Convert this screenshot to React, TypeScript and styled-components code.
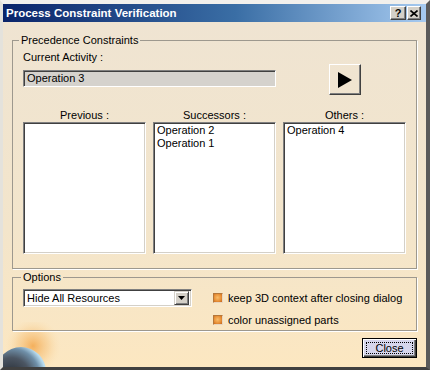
import React from 'react';
import styled, { createGlobalStyle } from 'styled-components';

const GlobalStyle = createGlobalStyle`
    body {
        margin: 0;
        background: #ffffff;
        font-family: "Liberation Sans", Arial, sans-serif;
        font-size: 11px;
        color: #000;
    }
`;

const columns = [
    { title: 'Previous :', items: [] as string[] },
    { title: 'Successors :', items: ['Operation 2', 'Operation 1'] },
    { title: 'Others :', items: ['Operation 4'] },
];

const options = ['keep 3D context after closing dialog', 'color unassigned parts'];

const App = () => {
    return (
        <>
            <GlobalStyle />
            <Window>
                <TitleBar>
                    <Title>Process Constraint Verification</Title>
                    <CaptionButtons>
                        <CaptionButton $w={16}>?</CaptionButton>
                        <CaptionButton $w={14}>
                            <svg width='8' height='7' viewBox='0 0 8 7'>
                                <path d='M0.5 0.5 L7.5 6.5 M7.5 0.5 L0.5 6.5' stroke='#000' strokeWidth='1.6' />
                            </svg>
                        </CaptionButton>
                    </CaptionButtons>
                </TitleBar>
                <Body>
                    <Globe width='60' height='45' viewBox='0 0 60 45'>
                        <defs>
                            <radialGradient id='glow' cx='0.5' cy='0.5' r='0.5'>
                                <stop offset='0' stopColor='#f3a64a' stopOpacity='0.85' />
                                <stop offset='0.55' stopColor='#f6c27a' stopOpacity='0.45' />
                                <stop offset='1' stopColor='#fbe0b0' stopOpacity='0' />
                            </radialGradient>
                            <radialGradient id='earth' cx='0.3' cy='0.6' r='0.7'>
                                <stop offset='0' stopColor='#23282f' />
                                <stop offset='0.55' stopColor='#4b5562' />
                                <stop offset='0.82' stopColor='#6f8fa8' />
                                <stop offset='1' stopColor='#b8dcf0' />
                            </radialGradient>
                        </defs>
                        <circle cx='30' cy='24' r='28' fill='url(#glow)' />
                        <circle cx='18' cy='50' r='25' fill='url(#earth)' />
                    </Globe>
                    <Group>
                        <Legend $shift={-4}>Precedence Constraints</Legend>
                        <FieldLabel>Current Activity :</FieldLabel>
                        <ActivityRow>
                            <ReadOnlyField>Operation 3</ReadOnlyField>
                            <PlayButton>
                                <svg width='14' height='16' viewBox='0 0 14 16'>
                                    <path d='M0 0 L14 8 L0 16 Z' fill='#000' />
                                </svg>
                            </PlayButton>
                        </ActivityRow>
                        <Columns>
                            {columns.map((col) => (
                                <Column key={col.title}>
                                    <ColumnTitle>{col.title}</ColumnTitle>
                                    <ListBox>
                                        {col.items.map((item) => (
                                            <ListItem key={item}>{item}</ListItem>
                                        ))}
                                    </ListBox>
                                </Column>
                            ))}
                        </Columns>
                    </Group>
                    <Group $bottom={2} $gap={2}>
                        <Legend $shift={-2}>Options</Legend>
                        <OptionsRow>
                            <Select>
                                <SelectText>Hide All Resources</SelectText>
                                <DropButton>
                                    <svg width='7' height='4' viewBox='0 0 7 4'>
                                        <path d='M0 0 L7 0 L3.5 4 Z' fill='#000' />
                                    </svg>
                                </DropButton>
                            </Select>
                            <Checks>
                                {options.map((label) => (
                                    <CheckRow key={label}>
                                        <CheckBox />
                                        {label}
                                    </CheckRow>
                                ))}
                            </Checks>
                        </OptionsRow>
                    </Group>
                    <Footer>
                        <CloseButton>
                            <FocusRing>Close</FocusRing>
                        </CloseButton>
                    </Footer>
                </Body>
            </Window>
        </>
    );
};

const Window = styled.div`
    position: relative;
    width: 430px;
    height: 370px;
    box-sizing: border-box;
    display: flex;
    flex-direction: column;
    border-style: solid;
    border-width: 4px 4px 3px 3px;
    border-color: #f2f0ec #5a5a5a #404040 #e4e2dc;
    overflow: hidden;
`;

const TitleBar = styled.div`
    height: 18px;
    display: flex;
    align-items: center;
    justify-content: space-between;
    padding: 0 5px 0 3px;
    background: linear-gradient(to right, #0a246a 0%, #3a6ea5 55%, #a6caf0 100%);
`;

const Title = styled.span`
    color: #fff;
    font-weight: bold;
    font-size: 11.5px;
`;

const CaptionButtons = styled.div`
    display: flex;
    gap: 1px;
`;

const CaptionButton = styled.div<{ $w: number }>`
    width: ${(p) => p.$w}px;
    height: 14px;
    box-sizing: border-box;
    display: flex;
    align-items: center;
    justify-content: center;
    background: #d4d0c8;
    border: 1px solid;
    border-color: #fff #404040 #404040 #fff;
    box-shadow: inset -1px -1px 0 #808080;
    font-weight: bold;
    font-size: 11px;
    line-height: 12px;
`;

const Body = styled.div`
    position: relative;
    flex: 1;
    display: flex;
    flex-direction: column;
    padding: 0 9px;
    background: linear-gradient(to bottom, #efe4d2 0%, #f3e5cb 60%, #fce7c1 100%);
`;

const Globe = styled.svg`
    position: absolute;
    left: 0;
    bottom: 0;
    pointer-events: none;
`;

const Group = styled.fieldset<{ $bottom?: number; $gap?: number }>`
    position: relative;
    margin: ${(p) => p.$gap ?? 12}px 0 0;
    padding: 0 10px ${(p) => p.$bottom ?? 14}px 10px;
    min-width: 0;
    border: 1px solid #9d988e;
    box-shadow: 1px 1px 0 #fff;
`;

const Legend = styled.legend<{ $shift: number }>`
    margin-left: ${(p) => p.$shift}px;
    padding: 0 2px;
    line-height: 13px;
    font-size: 11px;
`;

const FieldLabel = styled.div`
    margin-top: 4px;
    line-height: 13px;
`;

const ActivityRow = styled.div`
    display: flex;
    align-items: flex-start;
`;

const ReadOnlyField = styled.div`
    width: 253px;
    height: 17px;
    margin-top: 6px;
    box-sizing: border-box;
    padding-left: 3px;
    line-height: 14px;
    background: #d5d2cd;
    border: 1px solid;
    border-color: #808080 #fff #fff #808080;
    box-shadow: inset 1px 1px 0 #404040;
`;

const PlayButton = styled.div`
    width: 32px;
    height: 31px;
    margin-left: 53px;
    box-sizing: border-box;
    display: flex;
    align-items: center;
    justify-content: center;
    border: 1px solid;
    border-color: #fff #404040 #404040 #fff;
    box-shadow: inset -1px -1px 0 #808080;
`;

const Columns = styled.div`
    display: flex;
    gap: 7px;
    margin-top: 14px;
`;

const Column = styled.div`
    width: 123px;
    display: flex;
    flex-direction: column;
`;

const ColumnTitle = styled.div`
    text-align: center;
    line-height: 13px;
`;

const ListBox = styled.div`
    height: 132px;
    box-sizing: border-box;
    padding: 1px 2px;
    background: #fff;
    border: 1px solid;
    border-color: #808080 #fff #fff #808080;
    box-shadow: inset 1px 1px 0 #404040, inset -1px -1px 0 #d4d0c8;
`;

const ListItem = styled.div`
    line-height: 13px;
    padding-left: 1px;
`;

const OptionsRow = styled.div`
    display: flex;
    align-items: flex-start;
`;

const Select = styled.div`
    width: 169px;
    height: 18px;
    margin-top: 5px;
    box-sizing: border-box;
    display: flex;
    align-items: center;
    justify-content: space-between;
    background: #fff;
    border: 1px solid;
    border-color: #808080 #fff #fff #808080;
    box-shadow: inset 1px 1px 0 #404040, inset -1px -1px 0 #d4d0c8;
    padding: 1px 2px 1px 3px;
`;

const SelectText = styled.span`
    line-height: 14px;
`;

const DropButton = styled.div`
    width: 15px;
    height: 14px;
    box-sizing: border-box;
    display: flex;
    align-items: center;
    justify-content: center;
    background: #d4d0c8;
    border: 1px solid;
    border-color: #d4d0c8 #404040 #404040 #d4d0c8;
    box-shadow: inset 1px 1px 0 #fff, inset -1px -1px 0 #808080;
`;

const Checks = styled.div`
    display: flex;
    flex-direction: column;
    gap: 6px;
    margin: 6px 0 0 21px;
`;

const CheckRow = styled.div`
    height: 16px;
    display: flex;
    align-items: center;
    gap: 5px;
`;

const CheckBox = styled.span`
    width: 10px;
    height: 10px;
    box-sizing: border-box;
    border: 1px solid #b4773a;
    border-right-color: #e8d6c0;
    border-bottom-color: #e8d6c0;
    background: radial-gradient(circle at 45% 45%, #f9bd6a 0%, #e99239 55%, #c2651c 100%);
`;

const Footer = styled.div`
    display: flex;
    justify-content: flex-end;
    margin-top: 7px;
`;

const CloseButton = styled.div`
    width: 55px;
    height: 20px;
    box-sizing: border-box;
    padding: 3px;
    background: #d6d6ec;
    border: 1px solid #000;
    box-shadow: inset 1px 1px 0 #fff, inset -1px -1px 0 #404040, inset -2px -2px 0 #808080;
`;

const FocusRing = styled.div`
    height: 100%;
    box-sizing: border-box;
    display: flex;
    align-items: center;
    justify-content: center;
    border: 1px dotted #000;
    font-size: 11px;
`;

export default App;
